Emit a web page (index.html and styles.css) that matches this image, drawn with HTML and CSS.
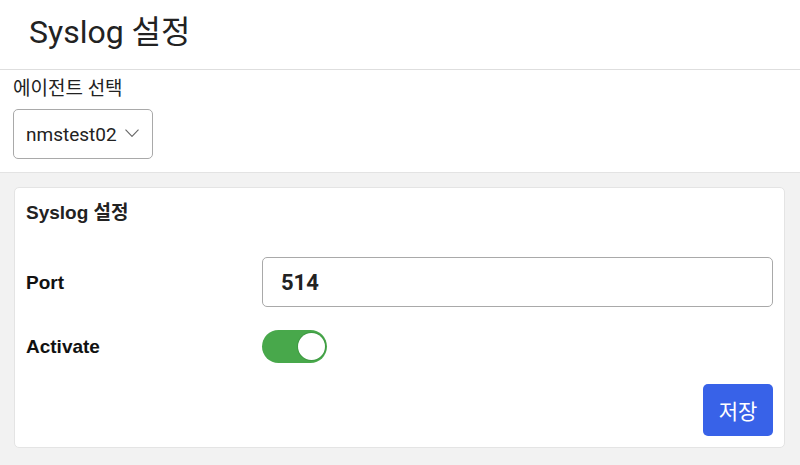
FILE: index.html
```html
<!DOCTYPE html>
<html lang="ko">
<head>
<meta charset="utf-8">
<link rel="stylesheet" href="styles.css">
</head>
<body>
<header class="page-header">
  <h1 class="page-title">Syslog 설정</h1>
</header>
<section class="agent">
  <div class="agent-label">에이전트 선택</div>
  <div class="select">
    <span class="select-value">nmstest02</span>
    <svg class="chevron" width="14" height="8" viewBox="0 0 14 8"><path d="M0.5 0.6 L7 7.4 L13.5 0.6" fill="none" stroke="#666" stroke-width="1.1"/></svg>
  </div>
</section>
<main class="content">
  <div class="card">
    <div class="card-title">Syslog 설정</div>
    <div class="row row-port">
      <div class="row-label">Port</div>
      <div class="input">514</div>
    </div>
    <div class="row row-activate">
      <div class="row-label">Activate</div>
      <div class="toggle"><span class="knob"></span></div>
    </div>
    <div class="actions">
      <button class="btn-save">저장</button>
    </div>
  </div>
</main>
</body>
</html>
```
FILE: styles.css
```css
* { box-sizing: border-box; }
html, body { margin: 0; padding: 0; }
body {
  width: 800px;
  height: 465px;
  overflow: hidden;
  font-family: Roboto, "Noto Sans CJK KR", sans-serif;
  color: #222;
  background: #f2f2f2;
}
.page-header {
  height: 70px;
  background: #fff;
  border-bottom: 1px solid #dedede;
  padding: 12px 0 0 29px;
}
.page-title {
  margin: 0;
  font-size: 32px;
  font-weight: 400;
  line-height: 40px;
  color: #222;
}
.agent {
  background: #fff;
  height: 103px;
  border-bottom: 1px solid #e3e3e3;
  padding: 7px 0 0 13px;
}
.agent-label {
  font-size: 19px;
  line-height: 24px;
  color: #222;
}
.select {
  margin-top: 8px;
  width: 140px;
  height: 50px;
  border: 1px solid #a9a9a9;
  border-radius: 5px;
  display: flex;
  align-items: center;
  padding: 0 13px 0 12px;
  justify-content: space-between;
}
.select-value { font-size: 19px; color: #222; }
.chevron { margin-top: -2px; }
.content {
  padding: 14px 15px 0 14px;
}
.card {
  background: #fff;
  border: 1px solid #e4e4e4;
  border-radius: 5px;
  height: 261px;
  padding: 15px 11px 0 11px;
  display: flex;
  flex-direction: column;
}
.card-title {
  font-family: "Liberation Sans", "Noto Sans CJK KR", sans-serif;
  font-size: 19px;
  font-weight: 700;
  line-height: 20px;
  color: #222;
}
.row {
  display: flex;
  align-items: center;
}
.row-label {
  width: 236px;
  padding-top: 2px;
  font-family: "Liberation Sans", "Noto Sans CJK KR", sans-serif;
  font-size: 19px;
  font-weight: 700;
  color: #111;
}
.row-port { margin-top: 34px; height: 50px; }
.row-activate { margin-top: 23px; height: 32px; }
.input {
  flex: 1;
  height: 50px;
  border: 1px solid #a9a9a9;
  border-radius: 5px;
  padding: 0 18px;
  display: flex;
  align-items: center;
  font-size: 22px;
  font-weight: 700;
  color: #222;
}
.toggle {
  position: relative;
  width: 65px;
  height: 33px;
  border-radius: 17px;
  background: #48a84b;
}
.knob {
  position: absolute;
  right: 2px;
  top: 3px;
  width: 27px;
  height: 27px;
  border-radius: 50%;
  background: #fff;
  box-shadow: 0 0 0 1px #3e9a42;
}
.actions {
  margin-top: 22px;
  display: flex;
  justify-content: flex-end;
}
.btn-save {
  width: 70px;
  height: 52px;
  border: none;
  border-radius: 5px;
  background: #3862e8;
  color: #fff;
  font-family: Roboto, "Noto Sans CJK KR", sans-serif;
  font-size: 21px;
  padding: 0;
}
```
